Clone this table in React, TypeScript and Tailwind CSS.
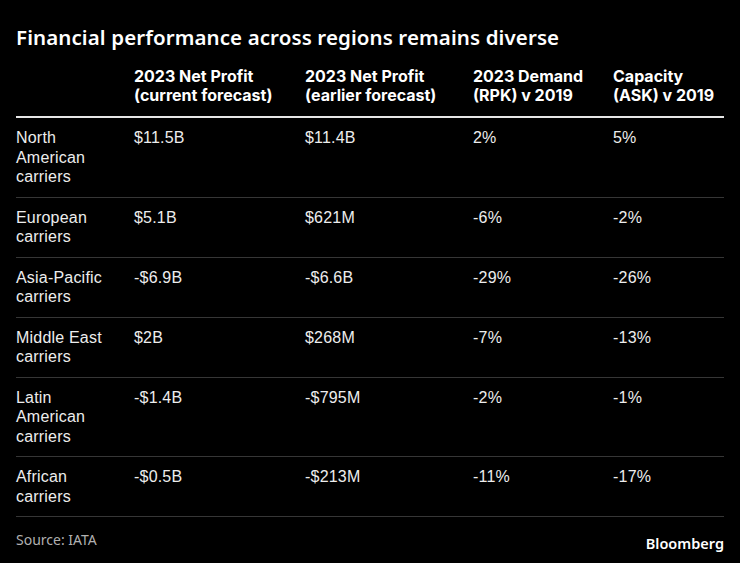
import React from "react";

const rows: [string, string, string, string, string][] = [
  ["North American carriers", "$11.5B", "$11.4B", "2%", "5%"],
  ["European carriers", "$5.1B", "$621M", "-6%", "-2%"],
  ["Asia-Pacific carriers", "-$6.9B", "-$6.6B", "-29%", "-26%"],
  ["Middle East carriers", "$2B", "$268M", "-7%", "-13%"],
  ["Latin American carriers", "-$1.4B", "-$795M", "-2%", "-1%"],
  ["African carriers", "-$0.5B", "-$213M", "-11%", "-17%"],
];

const headers = [
  ["2023 Net Profit", "(current forecast)"],
  ["2023 Net Profit", "(earlier forecast)"],
  ["2023 Demand", "(RPK) v 2019"],
  ["Capacity", "(ASK) v 2019"],
];

const grid = "grid grid-cols-[118px_171px_168px_140px_1fr]";

export default function App() {
  return (
    <div className="w-[740px] h-[563px] bg-black text-white overflow-hidden">
      <div className="px-4 pt-[23px]">
        <h1
          className="text-[20.5px] leading-[28px] font-semibold text-white tracking-[0.1px]"
          style={{ fontFamily: '"Noto Sans", "Open Sans", sans-serif' }}
        >
          Financial performance across regions remains diverse
        </h1>
        <div className="mt-[16px] w-[708px]">
          <div
            className={`${grid} pb-[11px] border-b-2 border-[#e6e6e6] text-[16px] leading-[19px] font-bold text-white`}
            style={{ fontFamily: 'Inter, "Liberation Sans", sans-serif' }}
          >
            <div />
            {headers.map((h, i) => (
              <div key={i}>
                <div>{h[0]}</div>
                <div>{h[1]}</div>
              </div>
            ))}
          </div>
          {rows.map((r, i) => (
            <div
              key={i}
              className={`${grid} pt-[10px] pb-[10px] border-b border-[#363636] text-[16px] leading-[19.5px] text-[#ededed] tracking-[0.2px]`}
              style={{ fontFamily: '"Liberation Sans", Arial, sans-serif' }}
            >
              <div className="w-[100px]">{r[0]}</div>
              <div>{r[1]}</div>
              <div>{r[2]}</div>
              <div>{r[3]}</div>
              <div>{r[4]}</div>
            </div>
          ))}
          <div
            className="flex items-start justify-between mt-[13px]"
            style={{ fontFamily: '"Noto Sans", "Open Sans", sans-serif' }}
          >
            <span className="text-[14px] leading-[20px] text-[#b0b0b0]">Source: IATA</span>
            <span className="text-[14.5px] leading-[20px] font-semibold text-white mt-[3px]">
              Bloomberg
            </span>
          </div>
        </div>
      </div>
    </div>
  );
}
